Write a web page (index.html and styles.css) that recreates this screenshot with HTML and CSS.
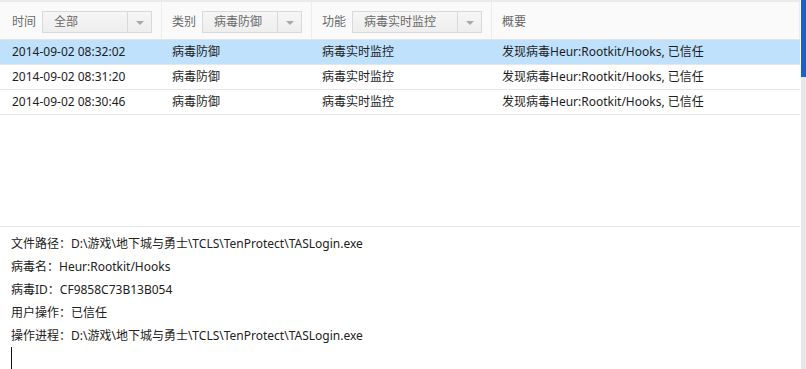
FILE: index.html
```html
<!DOCTYPE html>
<html lang="zh-CN">
<head>
  <meta charset="UTF-8">
  <title>病毒防御日志</title>
  <link rel="stylesheet" href="styles.css">
</head>
<body>

  <div class="window">
    <div class="main">
      <div class="list">
        <div class="filter-bar">
          <div class="filter-cell first">
            <span class="filter-label">时间</span>
            <div class="combo combo-time">
              <span class="combo-text">全部</span>
              <span class="combo-arrow"></span>
            </div>
          </div>
          <div class="filter-cell">
            <span class="filter-label">类别</span>
            <div class="combo combo-type">
              <span class="combo-text">病毒防御</span>
              <span class="combo-arrow"></span>
            </div>
          </div>
          <div class="filter-cell">
            <span class="filter-label">功能</span>
            <div class="combo combo-func">
              <span class="combo-text">病毒实时监控</span>
              <span class="combo-arrow"></span>
            </div>
          </div>
          <div class="filter-cell last">
            <span class="filter-label">概要</span>
          </div>
        </div>

        <div class="row selected">
          <div class="cell first">2014-09-02 08:32:02</div>
          <div class="cell">病毒防御</div>
          <div class="cell">病毒实时监控</div>
          <div class="cell">发现病毒Heur:Rootkit/Hooks, 已信任</div>
        </div>
        <div class="row">
          <div class="cell first">2014-09-02 08:31:20</div>
          <div class="cell">病毒防御</div>
          <div class="cell">病毒实时监控</div>
          <div class="cell">发现病毒Heur:Rootkit/Hooks, 已信任</div>
        </div>
        <div class="row">
          <div class="cell first">2014-09-02 08:30:46</div>
          <div class="cell">病毒防御</div>
          <div class="cell">病毒实时监控</div>
          <div class="cell">发现病毒Heur:Rootkit/Hooks, 已信任</div>
        </div>
      </div>

      <div class="detail">
        <p>文件路径：D:\游戏\地下城与勇士\TCLS\TenProtect\TASLogin.exe</p>
        <p>病毒名：Heur:Rootkit/Hooks</p>
        <p>病毒ID：CF9858C73B13B054</p>
        <p>用户操作：已信任</p>
        <p>操作进程：D:\游戏\地下城与勇士\TCLS\TenProtect\TASLogin.exe</p>
        <span class="caret"></span>
      </div>
    </div>

    <div class="side">
      <div class="side-top"></div>
    </div>
  </div>

</body>
</html>
```

FILE: styles.css
```css
body {
  margin: 0;
  padding: 0;
  background-color: #FFF;
  font-family: "Noto Sans", "Noto Sans CJK SC", sans-serif;
  font-size: 12px;
  color: #1E1E1E;
}

.window {
  display: flex;
  width: 806px;
  height: 369px;
  overflow: hidden;
}

.main {
  width: 800px;
  margin-right: 1px;
  display: flex;
  flex-direction: column;
}

/* list of log entries */
.list {
  height: 224px;
  border-bottom: 1px solid #E6E6E6;
  border-top: 2px solid #EBEBEB;
}

.filter-bar {
  display: grid;
  grid-template-columns: 162px 150px 180px 1fr;
  height: 37px;
  background-color: #FAFAFA;
  border-bottom: 1px solid #E4E4E4;
}

.filter-cell {
  display: flex;
  align-items: center;
  padding-left: 10px;
  border-right: 1px solid #ECECEC;
  color: #6A6A6A;
}

.filter-cell.first {
  padding-left: 12px;
}

.filter-label {
  width: 30px;
  flex-shrink: 0;
}

.combo {
  display: flex;
  height: 20px;
  margin-top: 3px;
  border: 1px solid #D9D9D9;
  background: linear-gradient(#F6F6F6, #EEEEEE);
  color: #6A6A6A;
}

.combo-time { width: 108px; }
.combo-type { width: 98px; }
.combo-func { width: 128px; }

.combo-text {
  flex-grow: 1;
  padding-left: 11px;
  line-height: 20px;
}

.combo-arrow {
  width: 23px;
  border-left: 1px solid #D9D9D9;
  position: relative;
}

.combo-arrow::after {
  content: "";
  position: absolute;
  left: 8px;
  top: 9px;
  border-left: 4px solid transparent;
  border-right: 4px solid transparent;
  border-top: 4px solid #A8A8A8;
}

.row {
  display: grid;
  grid-template-columns: 162px 150px 180px 1fr;
  height: 24px;
  border-bottom: 1px solid #E6E6E6;
  line-height: 24px;
}

.row.selected {
  background-color: #BFE1FB;
}

.cell {
  padding-left: 10px;
  white-space: nowrap;
}

.cell.first {
  padding-left: 12px;
}

/* detail panel */
.detail {
  padding: 5px 11px 0;
}

.detail p {
  margin: 0;
  line-height: 23px;
  color: #222;
}

.caret {
  display: block;
  width: 1px;
  height: 22px;
  background-color: #111;
}

.side {
  width: 5px;
  background-color: #E8E8E8;
}

.side-top {
  height: 77px;
  background-color: #1C5FC7;
}
```
